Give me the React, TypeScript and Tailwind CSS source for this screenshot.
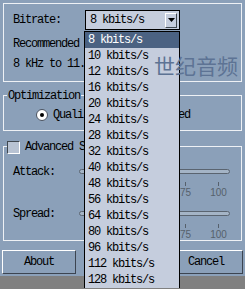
const RATES = [8, 10, 12, 16, 20, 24, 28, 32, 40, 48, 56, 64, 80, 96, 112, 128];

function Radio({ checked }: { checked?: boolean }) {
  return (
    <span className="flex h-[12px] w-[12px] items-center justify-center rounded-full border border-[#4a5260] bg-white">
      {checked && <span className="h-[4px] w-[4px] rounded-full bg-black" />}
    </span>
  );
}

// only the 75 and 100 marks show past the open list
const TICKS = [
  { x: 7, t: "" },
  { x: 40, t: "" },
  { x: 73, t: "" },
  { x: 106, t: "75" },
  { x: 139, t: "100" },
];

function Slider({ label }: { label: string }) {
  return (
    <div className="flex">
      <div className="w-[66px] pt-[5px] leading-[16px]">{label}</div>
      <div className="flex w-[151px] flex-col">
        <div className="mt-[10px] h-[5px] rounded-full border border-[#5a6470] bg-[#a4b4c6]" />
        <div className="relative mt-[8px] h-[18px] font-['Liberation_Sans',sans-serif] text-[10px] tracking-normal text-[#56606c]">
          {TICKS.map((k) => (
            <div key={k.x}>
              <span className="absolute top-0 h-[4px] w-px bg-[#56606c]" style={{ left: k.x }} />
              {k.t && (
                <span className="absolute top-[5px] -translate-x-1/2 leading-[12px]" style={{ left: k.x + 0.5 }}>
                  {k.t}
                </span>
              )}
            </div>
          ))}
        </div>
      </div>
    </div>
  );
}

function Button({ children }: { children?: string }) {
  return (
    <button className="flex h-[24px] w-[74px] items-center justify-center border border-t-white border-l-white border-r-[#3c4450] border-b-[#3c4450] bg-[#8ba0b9] leading-none text-black">
      {children}
    </button>
  );
}

export default function App() {
  return (
    <div className="relative flex h-[289px] w-[245px] flex-col overflow-hidden bg-[#8ba0b9] font-['Liberation_Mono',monospace] text-[12px] tracking-[-1.2px] text-black">
      <div className="mx-[3px] mt-[3px] h-[79px] border border-[#eef1f5] px-[9px]">
        <div className="mt-[6px] flex h-[20px] items-center">
          <span className="w-[72px]">Bitrate:</span>
          <div className="flex h-[20px] w-[95px] items-center justify-between border border-black bg-[#c5cddd] pl-[4px] pr-[2px]">
            <span>8 kbits/s</span>
            <span className="flex h-[15px] w-[12px] items-center justify-center border border-t-white border-l-white border-r-[#404850] border-b-[#404850] bg-[#c5cddd]">
              <svg width="7" height="4" viewBox="0 0 7 4">
                <path d="M0 0h7L3.5 4z" fill="#000" />
              </svg>
            </span>
          </div>
        </div>
        <div className="mt-[6px] leading-[16px]">Recommended</div>
        <div className="mt-[4px] leading-[16px]">8 kHz to 11.</div>
      </div>

      <div className="relative mx-[3px] mt-[13px] h-[36px] border border-[#eef1f5]">
        <span className="absolute -top-[8px] left-[3px] bg-[#8ba0b9] px-px leading-[16px]">Optimization</span>
        <div className="flex items-center pl-[32px] pt-[11px]">
          <Radio checked />
          <span className="ml-[5px] w-[90px] leading-[16px]">Quali</span>
          <Radio />
          <span className="ml-[5px] leading-[16px]">Speed</span>
        </div>
      </div>

      <div className="relative mx-[3px] mt-[15px] h-[95px] border border-[#eef1f5] px-[9px]">
        <div className="absolute -top-[8px] left-[3px] flex items-center gap-[5px] bg-[#8ba0b9] pr-px">
          <span className="h-[13px] w-[13px] border border-t-[#404850] border-l-[#404850] border-r-white border-b-white bg-[#b8c3d3]" />
          <span className="leading-[16px]">Advanced S</span>
        </div>
        <div className="mt-[12px]">
          <Slider label="Attack:" />
        </div>
        <div className="mt-[1px]">
          <Slider label="Spread:" />
        </div>
      </div>

      <div className="mx-[2px] mt-[9px] flex justify-between">
        <Button>About</Button>
        <Button />
        <Button>Cancel</Button>
      </div>
      <div className="mt-[2px] flex-1 bg-[#808080]" />

      <ul className="absolute left-[84px] top-[31px] w-[96px] border border-b-0 border-black bg-[#c5cddd]">
        {RATES.map((r, i) => (
          <li
            key={r}
            className={
              i === 0
                ? "h-[16px] bg-[#4b6282] pl-[3px] leading-[16px] text-white"
                : "h-[16px] pl-[3px] leading-[16px] text-black"
            }
          >
            {r} kbits/s
          </li>
        ))}
      </ul>

      <span className="absolute left-[154px] top-[52px] font-['Noto_Sans_CJK_SC',sans-serif] text-[21px] leading-[26px] tracking-normal text-[#5d7394]">
        世纪音频
      </span>
    </div>
  );
}
